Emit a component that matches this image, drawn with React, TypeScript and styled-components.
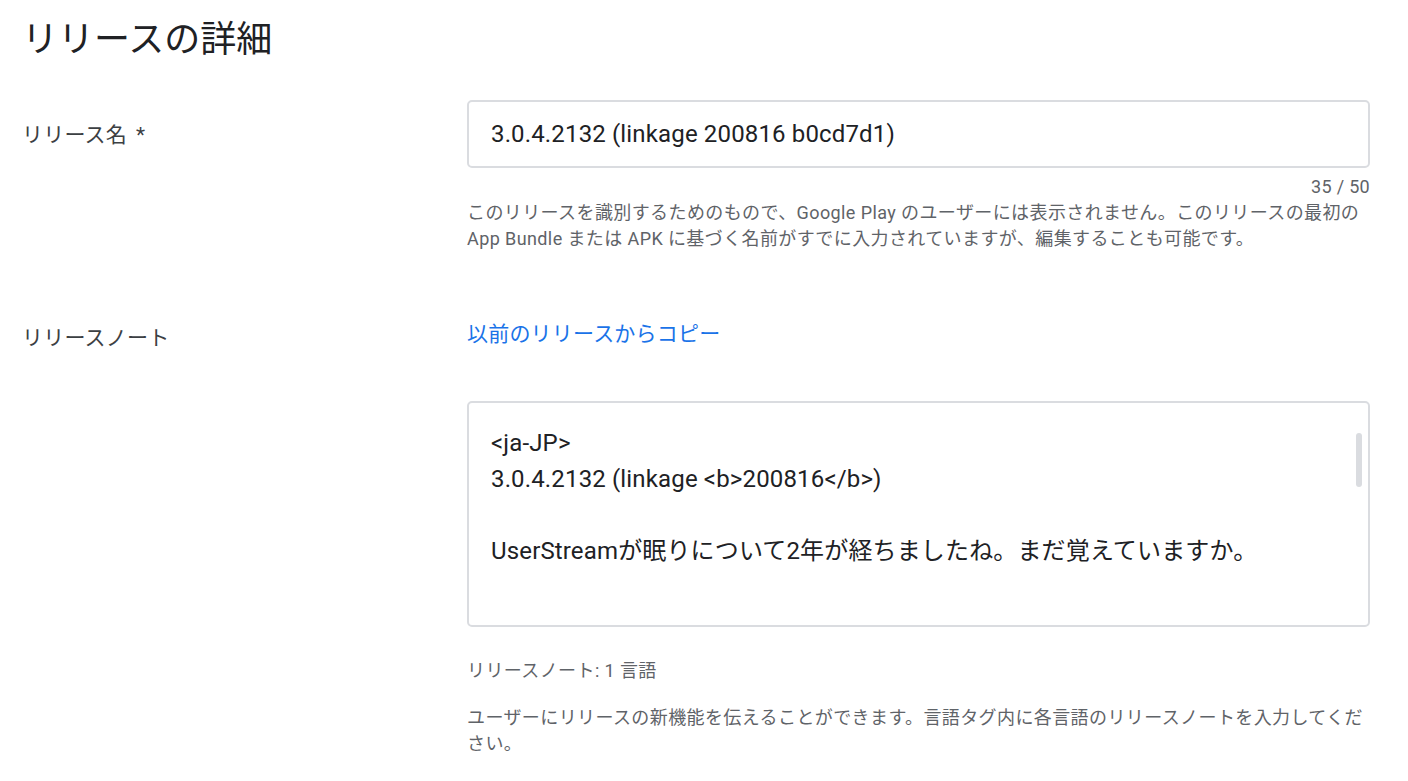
import React from 'react';
import styled, { createGlobalStyle } from 'styled-components';

const GlobalStyle = createGlobalStyle`
    html, body {
        margin: 0;
        padding: 0;
        background: #ffffff;
    }
    body {
        font-family: Roboto, "Noto Sans CJK JP", "Noto Sans", sans-serif;
        color: #202124;
    }
`;

const Page = styled.main`
    width: 1408px;
    box-sizing: border-box;
    padding: 16px 38px 0 22px;
`;

const Title = styled.h1`
    margin: 0 0 36px;
    font-size: 36px;
    line-height: 48px;
    font-weight: 400;
    color: #202124;
`;

const FieldRow = styled.section<{ $gap?: number }>`
    display: grid;
    grid-template-columns: 445px 1fr;
    margin-bottom: ${(p) => p.$gap ?? 0}px;
`;

const Label = styled.div<{ $top: number }>`
    padding-top: ${(p) => p.$top}px;
    font-size: 21px;
    line-height: 28px;
    letter-spacing: 0.2px;
    color: #3c4043;
`;

const Required = styled.span`
    margin-left: 9px;
`;

const Field = styled.div`
    display: flex;
    flex-direction: column;
`;

const TextInput = styled.input`
    box-sizing: border-box;
    width: 100%;
    height: 68px;
    padding: 0 22px;
    border: 2px solid #dadce0;
    border-radius: 5px;
    font-family: Roboto, "Noto Sans CJK JP", sans-serif;
    font-size: 24px;
    letter-spacing: 0.15px;
    color: #202124;
    background: #fff;
    outline: none;
`;

const Counter = styled.div`
    margin-top: 7px;
    text-align: right;
    font-size: 18px;
    line-height: 24px;
    letter-spacing: 0.3px;
    color: #5f6368;
`;

const Hint = styled.p<{ $top?: number }>`
    margin: ${(p) => p.$top ?? 1}px 0 0;
    font-size: 18px;
    line-height: 26px;
    letter-spacing: 0.4px;
    color: #5f6368;
`;

const CopyLink = styled.a`
    align-self: flex-start;
    font-size: 21px;
    line-height: 28px;
    letter-spacing: 0.2px;
    color: #1a73e8;
    text-decoration: none;
    cursor: pointer;
`;

const NotesBox = styled.div`
    position: relative;
    box-sizing: border-box;
    margin-top: 53px;
    height: 226px;
    padding: 22px 22px;
    border: 2px solid #dadce0;
    border-radius: 5px;
    overflow: hidden;
    font-size: 24px;
    line-height: 36px;
    letter-spacing: 0.15px;
    color: #202124;
    white-space: pre-wrap;
`;

const ScrollThumb = styled.div`
    position: absolute;
    top: 30px;
    right: 6px;
    width: 6px;
    height: 54px;
    border-radius: 3px;
    background: #dadce0;
`;

const notes = `<ja-JP>
3.0.4.2132 (linkage <b>200816</b>)

UserStreamが眠りについて2年が経ちましたね。まだ覚えていますか。`;

export default function App() {
    return (
        <>
            <GlobalStyle />
            <Page>
                <Title>リリースの詳細</Title>

                <FieldRow $gap={68}>
                    <Label $top={21}>
                        リリース名<Required>*</Required>
                    </Label>
                    <Field>
                        <TextInput readOnly defaultValue="3.0.4.2132 (linkage 200816 b0cd7d1)" />
                        <Counter>35 / 50</Counter>
                        <Hint>
                            このリリースを識別するためのもので、Google Play のユーザーには表示されません。このリリースの最初の App Bundle または APK に基づく名前がすでに入力されていますが、編集することも可能です。
                        </Hint>
                    </Field>
                </FieldRow>

                <FieldRow>
                    <Label $top={4}>リリースノート</Label>
                    <Field>
                        <CopyLink>以前のリリースからコピー</CopyLink>
                        <NotesBox>
                            {notes}
                            <ScrollThumb />
                        </NotesBox>
                        <Hint $top={31}>リリースノート: 1 言語</Hint>
                        <Hint $top={21}>
                            ユーザーにリリースの新機能を伝えることができます。言語タグ内に各言語のリリースノートを入力してください。
                        </Hint>
                    </Field>
                </FieldRow>
            </Page>
        </>
    );
}
